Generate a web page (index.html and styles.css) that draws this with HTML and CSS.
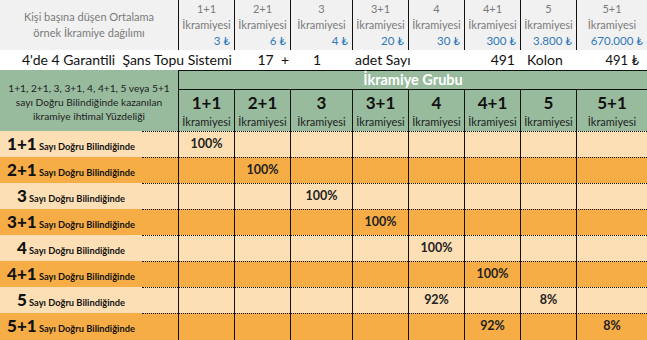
FILE: index.html
```html
<!DOCTYPE html>
<html lang="tr">
<head>
<meta charset="utf-8">
<title>Şans Topu Sistemi</title>
<link rel="stylesheet" href="styles.css">
</head>
<body>
<div class="sheet">
  <div class="grid top">
    <div class="info-label">Kişi başına düşen Ortalama<br>örnek İkramiye dağılımı</div>
    <div class="prize"><span>1+1</span><span>İkramiyesi</span><span class="val">3 ₺</span></div>
    <div class="prize"><span>2+1</span><span>İkramiyesi</span><span class="val">6 ₺</span></div>
    <div class="prize"><span>3</span><span>İkramiyesi</span><span class="val">4 ₺</span></div>
    <div class="prize"><span>3+1</span><span>İkramiyesi</span><span class="val">20 ₺</span></div>
    <div class="prize"><span>4</span><span>İkramiyesi</span><span class="val">30 ₺</span></div>
    <div class="prize"><span>4+1</span><span>İkramiyesi</span><span class="val">300 ₺</span></div>
    <div class="prize"><span>5</span><span>İkramiyesi</span><span class="val">3.800 ₺</span></div>
    <div class="prize"><span>5+1</span><span>İkramiyesi</span><span class="val">670.000 ₺</span></div>
  </div>

  <div class="grid info">
    <div class="title">4'de 4 Garantili&nbsp; Şans Topu Sistemi</div>
    <div class="n17">17 &nbsp;+</div>
    <div class="n1">1</div>
    <div class="adet">adet Sayı</div>
    <div class="kolon-n">491</div>
    <div class="kolon">Kolon</div>
    <div class="cost">491 ₺</div>
  </div>

  <div class="grid head">
    <div class="head-label">1+1, 2+1, 3, 3+1, 4, 4+1, 5 veya 5+1<br>sayı Doğru Bilindiğinde kazanılan<br>ikramiye ihtimal Yüzdeliği</div>
    <div class="group">İkramiye Grubu</div>
    <div class="sub"><b>1+1</b><span>İkramiyesi</span></div>
    <div class="sub"><b>2+1</b><span>İkramiyesi</span></div>
    <div class="sub"><b>3</b><span>İkramiyesi</span></div>
    <div class="sub"><b>3+1</b><span>İkramiyesi</span></div>
    <div class="sub"><b>4</b><span>İkramiyesi</span></div>
    <div class="sub"><b>4+1</b><span>İkramiyesi</span></div>
    <div class="sub"><b>5</b><span>İkramiyesi</span></div>
    <div class="sub"><b>5+1</b><span>İkramiyesi</span></div>
  </div>

  <div class="grid row light">
    <div class="label"><b>1+1</b> Sayı Doğru Bilindiğinde</div><div class="gap"></div>
    <div class="c">100%</div><div class="c"></div><div class="c"></div><div class="c"></div><div class="c"></div><div class="c"></div><div class="c"></div><div class="c"></div>
  </div>
  <div class="grid row dark">
    <div class="label"><b>2+1</b> Sayı Doğru Bilindiğinde</div><div class="gap"></div>
    <div class="c"></div><div class="c">100%</div><div class="c"></div><div class="c"></div><div class="c"></div><div class="c"></div><div class="c"></div><div class="c"></div>
  </div>
  <div class="grid row light">
    <div class="label"><b>3</b> Sayı Doğru Bilindiğinde</div><div class="gap"></div>
    <div class="c"></div><div class="c"></div><div class="c">100%</div><div class="c"></div><div class="c"></div><div class="c"></div><div class="c"></div><div class="c"></div>
  </div>
  <div class="grid row dark">
    <div class="label"><b>3+1</b> Sayı Doğru Bilindiğinde</div><div class="gap"></div>
    <div class="c"></div><div class="c"></div><div class="c"></div><div class="c">100%</div><div class="c"></div><div class="c"></div><div class="c"></div><div class="c"></div>
  </div>
  <div class="grid row light">
    <div class="label"><b>4</b> Sayı Doğru Bilindiğinde</div><div class="gap"></div>
    <div class="c"></div><div class="c"></div><div class="c"></div><div class="c"></div><div class="c">100%</div><div class="c"></div><div class="c"></div><div class="c"></div>
  </div>
  <div class="grid row dark">
    <div class="label"><b>4+1</b> Sayı Doğru Bilindiğinde</div><div class="gap"></div>
    <div class="c"></div><div class="c"></div><div class="c"></div><div class="c"></div><div class="c"></div><div class="c">100%</div><div class="c"></div><div class="c"></div>
  </div>
  <div class="grid row light">
    <div class="label"><b>5</b> Sayı Doğru Bilindiğinde</div><div class="gap"></div>
    <div class="c"></div><div class="c"></div><div class="c"></div><div class="c"></div><div class="c">92%</div><div class="c"></div><div class="c">8%</div><div class="c"></div>
  </div>
  <div class="grid row dark last">
    <div class="label"><b>5+1</b> Sayı Doğru Bilindiğinde</div><div class="gap"></div>
    <div class="c"></div><div class="c"></div><div class="c"></div><div class="c"></div><div class="c"></div><div class="c">92%</div><div class="c"></div><div class="c">8%</div>
  </div>
</div>
</body>
</html>
```

FILE: styles.css
```css
* { box-sizing: border-box; margin: 0; padding: 0; }
html, body { background: #ffffff; }
body {
  font-family: Lato, "Open Sans", "DejaVu Sans", sans-serif;
  color: #111;
  width: 647px;
  overflow: hidden;
}
.sheet { width: 647px; }
.grid {
  display: grid;
  grid-template-columns: 142px 36px 56px 56px 62px 56px 56px 56px 56px 71px;
}

/* top prize strip */
.top { height: 50px; background: #f1f1f1; }
.info-label {
  grid-column: 1 / 3;
  display: flex; align-items: center; justify-content: center;
  text-align: center;
  font-size: 11px; line-height: 16px; color: #7b7b7b;
}
.prize {
  border-left: 1px solid #111;
  display: flex; flex-direction: column;
  font-size: 11px; line-height: 16px; color: #7b7b7b;
  text-align: center;
  padding-top: 1px;
  white-space: nowrap;
}
.prize .val { text-align: right; padding-right: 4px; color: #2f78b9; font-size: 11.5px; }

/* info row */
.info { height: 20px; background: #fff; font-size: 14px; line-height: 20px; color: #111; white-space: nowrap; }
.title { grid-column: 1 / 4; padding-left: 22px; }
.n17 { grid-column: 4; text-align: right; padding-right: 1px; }
.n1 { grid-column: 5; padding-left: 23px; }
.adet { grid-column: 6 / 8; padding-left: 3px; }
.kolon-n { grid-column: 8; text-align: right; padding-right: 5px; }
.kolon { grid-column: 9; padding-left: 7px; }
.cost { grid-column: 10; text-align: right; padding-right: 8px; font-size: 13px; }

/* green header */
.head {
  grid-template-rows: 20px 41px;
  background: #98bb9e;
}
.head-label {
  grid-column: 1 / 3; grid-row: 1 / 3;
  display: flex; align-items: center; justify-content: center;
  text-align: center;
  font-size: 10.2px; line-height: 14px; color: #222;
  padding-top: 2px;
}
.group {
  grid-column: 3 / 11; grid-row: 1;
  border-top: 1px solid #111; border-left: 1px solid #111; border-bottom: 1px solid #111;
  color: #fff; font-weight: 700; font-size: 14.5px; line-height: 18px;
  text-align: center;
}
.sub {
  grid-row: 2;
  border-left: 1px solid #111;
  display: flex; flex-direction: column; align-items: center;
  padding-top: 2px;
  white-space: nowrap;
}
.sub b { font-size: 17px; line-height: 22px; color: #111; }
.sub span { font-size: 11px; line-height: 15px; color: #222; }

/* body rows */
.row { height: 26px; }
.light { background: #fddfb5; }
.dark { background: #f7ad45; }
.label {
  grid-column: 1;
  text-align: center; white-space: nowrap;
  font-weight: 700; font-size: 9.3px; line-height: 26px; color: #111;
}
.label b { font-size: 17px; }
.gap { border-top: 1px dotted #111; }
.c {
  border-top: 1px dotted #111;
  border-left: 1px solid #111;
  text-align: center;
  font-weight: 700; font-size: 12.5px; line-height: 24px; color: #222;
}
.last { height: 27px; }
.last .gap, .last .c { border-bottom: 1px solid #111; }
```
